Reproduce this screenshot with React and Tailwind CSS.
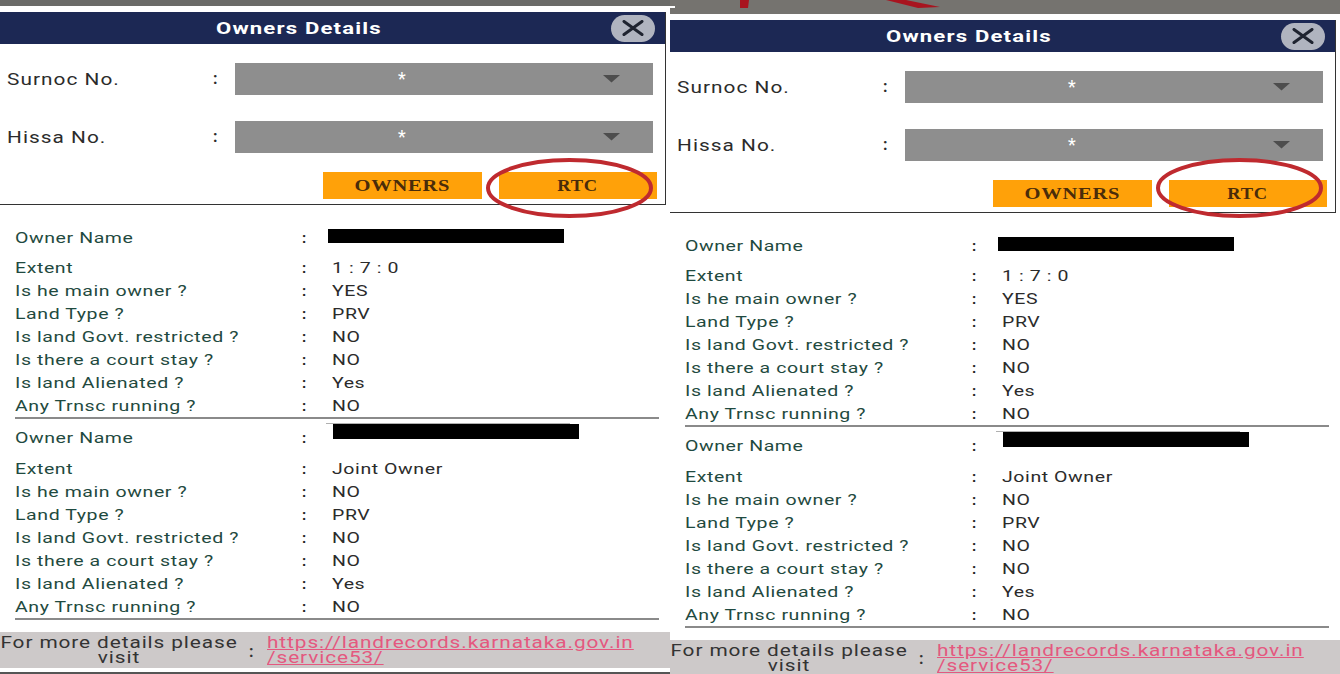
import React from "react";

const block1 = [
  ["Extent", "1 : 7 : 0"],
  ["Is he main owner ?", "YES"],
  ["Land Type ?", "PRV"],
  ["Is land Govt. restricted ?", "NO"],
  ["Is there a court stay ?", "NO"],
  ["Is land Alienated ?", "Yes"],
  ["Any Trnsc running ?", "NO"],
];

const block2 = [
  ["Extent", "Joint Owner"],
  ["Is he main owner ?", "NO"],
  ["Land Type ?", "PRV"],
  ["Is land Govt. restricted ?", "NO"],
  ["Is there a court stay ?", "NO"],
  ["Is land Alienated ?", "Yes"],
  ["Any Trnsc running ?", "NO"],
];

// the source picture is stretched sideways, so text gets a horizontal scale
const Wide = ({ children }) => (
  <span className="inline-block origin-left scale-x-[1.3] whitespace-nowrap">{children}</span>
);

const SelectRow = ({ label }) => (
  <div className="flex items-center h-8 text-[16px] text-[#2b2b2b]">
    <div className="w-[213px] pl-[7px] pt-[2px] tracking-[0.8px]"><Wide>{label}</Wide></div>
    <div className="w-[22px] font-bold">:</div>
    <div className="w-[418px] h-8 bg-[#8e8e8e] flex items-center">
      <div className="w-[334px] text-center text-white text-lg leading-none">*</div>
      <svg className="ml-[34px]" width="17" height="8" viewBox="0 0 17 8">
        <path d="M0 0H17L8.5 7.5Z" fill="#4d4d4d" />
      </svg>
    </div>
  </div>
);

const DetailRows = ({ children, rows, nameClass }) => (
  <div>
    <div className={nameClass}>
      <div className="w-[287px] text-[#1f4a40]"><Wide>Owner Name</Wide></div>
      <div className="w-[30px] font-bold text-[#222]">:</div>
      {children}
    </div>
    {rows.map(([label, value]) => (
      <div key={label} className="flex items-center h-[23px]">
        <div className="w-[287px] text-[#1f4a40]"><Wide>{label}</Wide></div>
        <div className="w-[30px] font-bold text-[#222]">:</div>
        <div className="text-[#2b2b2b]"><Wide>{value}</Wide></div>
      </div>
    ))}
  </div>
);

const Panel = ({ stripClass, right }) => (
  <div className="relative w-[670px] h-[674px] shrink-0 overflow-hidden bg-white">
    <div className={stripClass}>
      {right && (
        <svg width="300" height="14" viewBox="0 0 300 14">
          <rect x="0" y="6" width="5" height="2" fill="#fff" />
          <path d="M70 0H79L78 8H70Z" fill="#a8141f" />
          <path d="M216 0H236L270 7L248 8Z" fill="#a8141f" />
        </svg>
      )}
    </div>
    <div className="h-[6px]" />

    {/* top box */}
    <div className="w-[666px] border-r border-b border-[#333]">
      <div className="h-8 bg-[#1c2854] flex items-center justify-between pl-[216px] pr-[10px]">
        <div className="pt-[2px] text-white font-bold text-[17px] tracking-[0.9px]"><Wide>Owners Details</Wide></div>
        <div className="w-[44px] h-[27px] rounded-full bg-[#b0b4bf] flex items-center justify-center">
          <svg width="22" height="16" viewBox="0 0 22 16">
            <path d="M2 1.5L20 14.5M20 1.5L2 14.5" stroke="#1f2430" strokeWidth="3" strokeLinecap="round" />
          </svg>
        </div>
      </div>
      <div className="pt-[19px] pb-[5px]">
        <SelectRow label="Surnoc No." />
        <div className="h-[26px]" />
        <SelectRow label="Hissa No." />
        <div className="flex justify-end gap-[17px] mt-[19px] pr-[8px] font-['Liberation_Serif',serif] font-bold text-[16px] tracking-[0.6px] text-[#4a2c0a]">
          <div className="w-[159px] h-[27px] pt-[1px] bg-[#ffa109] flex items-center justify-center">
            <span className="inline-block scale-x-[1.28]">OWNERS</span>
          </div>
          <div className="w-[158px] h-[27px] pt-[1px] bg-[#ffa109] flex items-center justify-center">
            <span className="inline-block scale-x-[1.15]">RTC</span>
          </div>
        </div>
      </div>
    </div>

    {/* red circle drawn over the RTC button */}
    <svg className="absolute left-[484px] top-[156px]" width="172" height="64" viewBox="0 0 172 64">
      <ellipse cx="85.5" cy="32" rx="81.5" ry="28" fill="none" stroke="#bf2a2f" strokeWidth="4" />
    </svg>

    <div className="pl-[15px] w-[659px] pt-[15px] text-[15px] tracking-[0.45px]">
      <DetailRows rows={block1} nameClass="flex items-center h-[37px]">
        <div className="w-[236px] h-[14px] bg-black -ml-[4px] -mt-[5px]" />
      </DetailRows>
      <div className="h-[2px] -mt-[1px] bg-[#8a8a8a]" />
      <DetailRows rows={block2} nameClass="flex items-center h-[39px]">
        <div className="relative w-[246px] h-[15px] bg-black ml-[1px] -mt-[15px]">
          <div className="absolute -top-[1px] -left-[7px] w-[244px] h-px bg-[#b0b0b0]" />
        </div>
      </DetailRows>
      <div className="h-[2px] -mt-[1px] bg-[#8a8a8a]" />
    </div>

    <div
      className={
        right
          ? "mt-[12px] h-[34px] pt-[3px] bg-[#cdc9c9] flex items-start text-[16px] leading-[15px] tracking-[0.7px]"
          : "mt-[12px] h-[36px] pt-[3px] bg-[#cdc9c9] flex items-start text-[16px] leading-[15px] tracking-[0.7px]"
      }
    >
      <div className="w-[237px] flex justify-center text-[#333]">
        <div className="w-[192px] shrink-0 text-center scale-x-[1.3]">For more details please visit</div>
      </div>
      <div className="w-[30px] pl-[12px] self-center font-bold text-[#333]">:</div>
      <div className="w-[290px] origin-left scale-x-[1.3] text-[#e4587f] underline">
        https://landrecords.karnataka.gov.in /service53/
      </div>
    </div>
    {!right && <div className="mt-[4px] h-[2px] bg-[#555]" />}
  </div>
);

export default function App() {
  return (
    <div className="flex w-[1340px] h-[674px] overflow-hidden bg-white font-['Roboto',sans-serif]">
      <Panel stripClass="h-[6px] bg-[#6b6b68]" />
      <Panel stripClass="h-[14px] bg-[#75736f]" right />
    </div>
  );
}
